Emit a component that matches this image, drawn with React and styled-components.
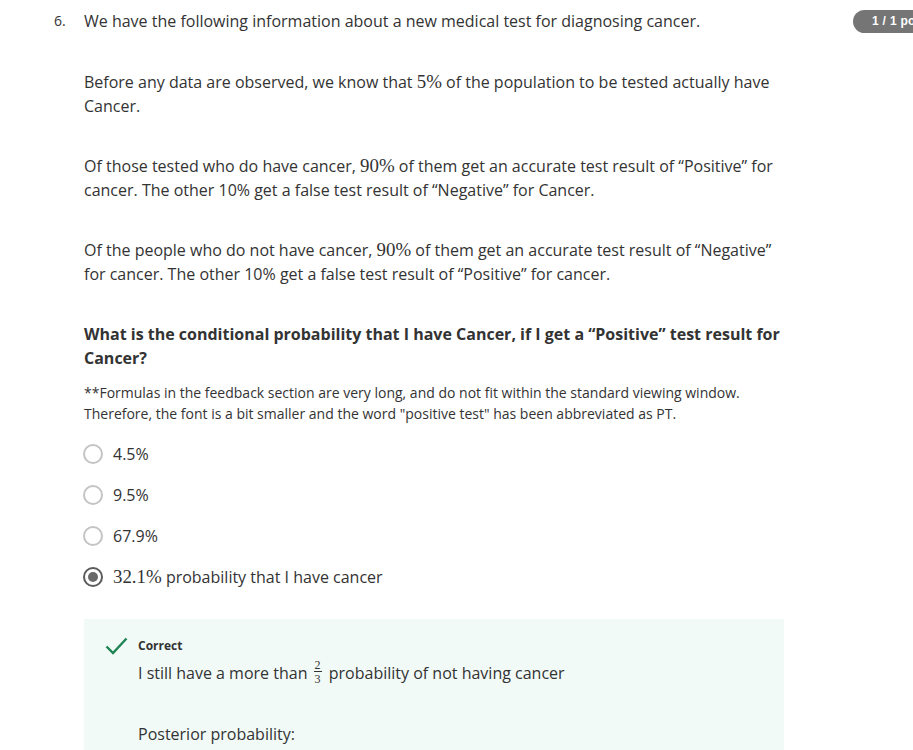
import React from 'react';
import styled, { createGlobalStyle } from 'styled-components';

const GlobalStyle = createGlobalStyle`
  html, body {
    margin: 0;
    padding: 0;
    background: #ffffff;
    overflow-x: hidden;
  }
  body {
    font-family: "Open Sans", "Liberation Sans", sans-serif;
    color: #333333;
  }
`;

const Page = styled.div`
  width: 913px;
  overflow: hidden;
  padding: 9px 0 0 54px;
  box-sizing: border-box;
`;

const QuestionRow = styled.div`
  display: flex;
  align-items: flex-start;
`;

const Number = styled.div`
  width: 30px;
  flex: none;
  font-size: 14px;
  line-height: 24px;
  color: #333333;
`;

const Body = styled.div`
  width: 700px;
  flex: none;
`;

const Badge = styled.div`
  flex: none;
  margin: 1px 0 0 69px;
  height: 23px;
  padding: 0 14px 0 19px;
  border-radius: 12px;
  background: #757575;
  color: #ffffff;
  font-family: "Liberation Sans", Arial, sans-serif;
  font-weight: 700;
  font-size: 12px;
  letter-spacing: 0.3px;
  line-height: 23px;
  white-space: pre;
`;

const Para = styled.p`
  margin: 0 0 ${p => p.$after || 36}px;
  font-size: 16px;
  line-height: 24px;
  font-weight: ${p => (p.$bold ? 700 : 400)};
  color: #333333;
`;

const Note = styled.p`
  margin: 0 0 19px;
  font-size: 14px;
  line-height: 21px;
  color: #333333;
`;

const Math = styled.span`
  font-family: "Liberation Serif", "DejaVu Serif", serif;
  font-size: 1.18em;
  line-height: 1;
`;

const Options = styled.div`
  display: flex;
  flex-direction: column;
  gap: 17px;
  margin-left: -1px;
  margin-top: -1px;
`;

const Option = styled.label`
  display: flex;
  align-items: center;
  gap: 10px;
  font-size: 16px;
  line-height: 24px;
  color: #333333;
`;

const Radio = styled.span`
  width: 20px;
  height: 20px;
  box-sizing: border-box;
  border-radius: 50%;
  border: 2px solid ${p => (p.$checked ? '#5b5b5b' : '#c4c4c4')};
  display: flex;
  align-items: center;
  justify-content: center;
  flex: none;

  &::after {
    content: '';
    display: ${p => (p.$checked ? 'block' : 'none')};
    width: 10px;
    height: 10px;
    border-radius: 50%;
    background: #6a6a6a;
  }
`;

const Feedback = styled.div`
  margin-top: 30px;
  background: #f1faf7;
  padding: 18px 0 4px 21px;
  display: flex;
  gap: 10px;
`;

const CheckIcon = styled.svg`
  flex: none;
  width: 23px;
  height: 18px;
`;

const FeedbackBody = styled.div`
  display: flex;
  flex-direction: column;
`;

const FeedbackTitle = styled.div`
  font-size: 12px;
  line-height: 18px;
  font-weight: 700;
  color: #333333;
  margin-bottom: 6px;
`;

const FeedbackText = styled.p`
  margin: 0 0 ${p => p.$after || 0}px;
  font-size: 16px;
  line-height: 24px;
  height: 24px;
  color: #333333;
`;

const Frac = styled.span`
  display: inline-block;
  vertical-align: middle;
  text-align: center;
  font-family: "Liberation Serif", "DejaVu Serif", serif;
  font-size: 12px;
  line-height: 10px;
  margin: -6px 3px 0 2px;
`;

const FracTop = styled.span`
  display: block;
  border-bottom: 1px solid #333333;
  padding: 0 1px 1px;
`;

const FracBottom = styled.span`
  display: block;
  padding-top: 2px;
`;

const options = [
  { label: '4.5%' },
  { label: '9.5%' },
  { label: '67.9%' },
];

export default function App() {
  return (
    <>
      <GlobalStyle />
      <Page>
        <QuestionRow>
          <Number>6.</Number>
          <Body>
            <Para $after={37}>We have the following information about a new medical test for diagnosing cancer.</Para>
            <Para>
              Before any data are observed, we know that <Math>5%</Math> of the population to be tested actually have Cancer.
            </Para>
            <Para>
              Of those tested who do have cancer, <Math>90%</Math> of them get an accurate test result of “Positive” for cancer. The other 10% get a false test result of “Negative” for Cancer.
            </Para>
            <Para>
              Of the people who do not have cancer, <Math>90%</Math> of them get an accurate test result of “Negative” for cancer. The other 10% get a false test result of “Positive” for cancer.
            </Para>
            <Para $bold $after={12}>
              What is the conditional probability that I have Cancer, if I get a “Positive” test result for Cancer?
            </Para>
            <Note>
              **Formulas in the feedback section are very long, and do not fit within the standard viewing window. Therefore, the font is a bit smaller and the word "positive test" has been abbreviated as PT.
            </Note>
            <Options>
              {options.map(o => (
                <Option key={o.label}>
                  <Radio />
                  {o.label}
                </Option>
              ))}
              <Option>
                <Radio $checked />
                <span><Math>32.1%</Math> probability that I have cancer</span>
              </Option>
            </Options>
            <Feedback>
              <CheckIcon viewBox="0 0 23 18">
                <path d="M1.5 9.5 L8 16 L21.5 1.5" fill="none" stroke="#1f8354" strokeWidth="2.4" />
              </CheckIcon>
              <FeedbackBody>
                <FeedbackTitle>Correct</FeedbackTitle>
                <FeedbackText $after={37}>
                  I still have a more than <Frac><FracTop>2</FracTop><FracBottom>3</FracBottom></Frac> probability of not having cancer
                </FeedbackText>
                <FeedbackText>Posterior probability:</FeedbackText>
              </FeedbackBody>
            </Feedback>
          </Body>
          <Badge>1 / 1 point</Badge>
        </QuestionRow>
      </Page>
    </>
  );
}
